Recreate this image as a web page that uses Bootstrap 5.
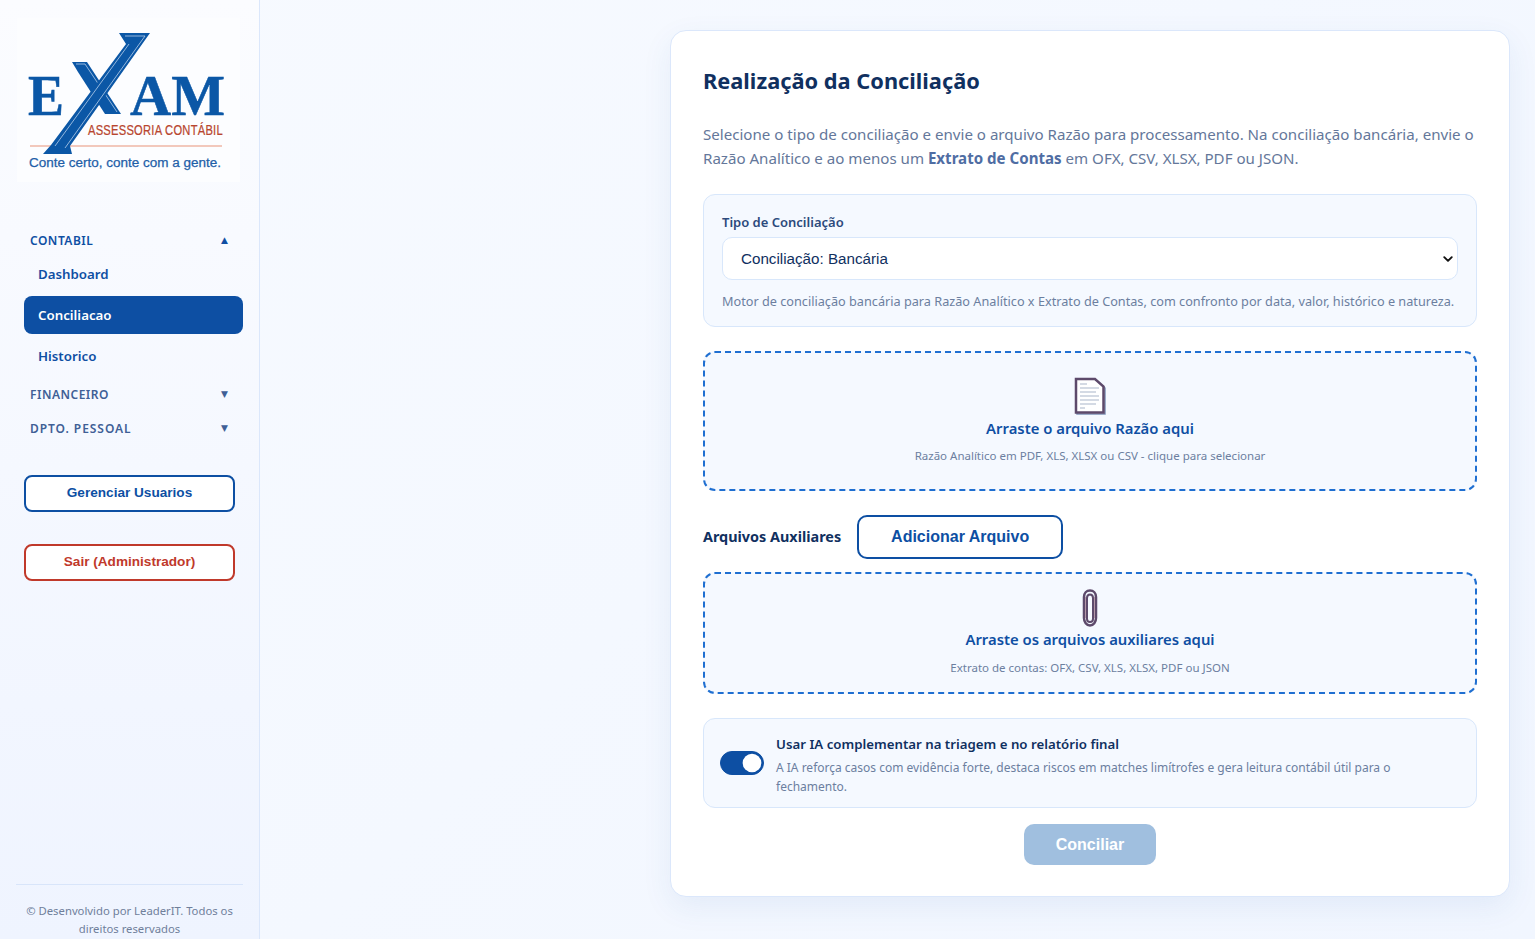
<!DOCTYPE html>
<html lang="pt-BR">
<head>
    <meta charset="UTF-8">
    <title>Conciliacao</title>
    <meta name="viewport" content="width=device-width, initial-scale=1">
    <link href="https://cdn.jsdelivr.net/npm/bootstrap@5.3.2/dist/css/bootstrap.min.css" rel="stylesheet">
    <style>
        body {
            font-family: "Noto Sans", "Liberation Sans", sans-serif;
            background: linear-gradient(135deg, #f7faff, #f1f6ff);
            color: #10305f;
            height: 939px;
            overflow: hidden;
        }
        .sidebar {
            width: 260px;
            height: 939px;
            flex: none;
            background: linear-gradient(180deg, #fbfcff, #eff4ff);
            border-right: 1px solid #dbe7fb;
        }
        .logo-box { height: 218px; padding: 0 17px; }
        .nav-group {
            padding: 0 30px;
            font-size: 12px;
            font-weight: 600;
            letter-spacing: .5px;
            color: #3f5f96;
            height: 34px;
        }
        .nav-group.open { color: #0f4fa3; }
        .nav-group.wide { letter-spacing: .95px; }
        .nav-group span:last-child { font-family: "DejaVu Sans", sans-serif; font-size: 9px; letter-spacing: 0; margin-right: 1px; }
        .nav-item-link {
            display: block;
            margin: 0 16px 0 24px;
            height: 38px;
            line-height: 38px;
            padding-left: 14px;
            border-radius: 8px;
            font-size: 13.3px;
            font-weight: 600;
            color: #0f4fa3;
            text-decoration: none;
        }
        .nav-item-link.first { height: 34px; line-height: 34px; margin-top: -1px; }
        .nav-item-link.active { background: #0d4fa3; color: #fff; margin-top: 5px; }
        .nav-item-link.last { margin-top: 3px; margin-bottom: 3px; }
        .nav-stack { padding-top: 6px; }
        .side-btn {
            font-family: "Liberation Sans", sans-serif;
            font-size: 13.6px;
            font-weight: 700;
            height: 37px;
            width: 211px;
            margin: 29px 0 0 24px;
            padding: 0;
            border-radius: 8px;
            border: 2px solid #0d4fa3;
            background: #fff;
            color: #0d4fa3;
        }
        .side-btn.danger { border-color: #c0392b; color: #c0392b; margin-top: 32px; }
        .side-footer {
            margin: auto 16px 0;
            border-top: 1px solid #d8e5fa;
            padding: 17px 0 1px;
            font-size: 11.3px;
            line-height: 18px;
            color: #6f7f9b;
        }
        .main-card {
            width: 840px;
            height: 867px;
            margin: 30px 25px 0 auto;
            padding: 32px;
            background: #fff;
            border: 1px solid #dbe7fb;
            border-radius: 16px;
            box-shadow: 0 10px 30px rgba(40, 90, 170, .08);
        }
        .main-card h1 { font-size: 21.8px; font-weight: 700; color: #10305f; margin: 3px 0 26px; line-height: 30px; }
        .intro { font-size: 15.1px; line-height: 24px; color: #64779a; margin-bottom: 24px; }
        .intro strong { color: #4f6da3; }
        .panel {
            background: #f5f9ff;
            border: 1px solid #d8e7fb;
            border-radius: 12px;
        }
        .type-panel { height: 133px; padding: 18px 18px 0; }
        .type-panel label { font-size: 13px; font-weight: 600; color: #2c4a7c; line-height: 18px; margin-bottom: 6px; display: block; }
        .type-panel .form-select {
            font-family: "Liberation Sans", sans-serif;
            font-size: 15.2px;
            height: 43px;
            padding-top: 8px;
            padding-left: 18px;
            border-color: #d8e7fb;
            border-radius: 10px;
            color: #10305f;
            background-image: url("data:image/svg+xml,%3csvg xmlns='http://www.w3.org/2000/svg' viewBox='0 0 16 16'%3e%3cpath fill='none' stroke='%23111' stroke-linecap='round' stroke-linejoin='round' stroke-width='3' d='m2 5 6 6 6-6'/%3e%3c/svg%3e");
            background-position: right 4px center;
            background-size: 10px 10px;
        }
        .type-panel small { display: block; margin-top: 12px; font-size: 12.7px; color: #6c7f9f; line-height: 18px; }
        .dropzone {
            background: #f5f9ff;
            border: 2px dashed #1f6fd1;
            border-radius: 12px;
            text-align: center;
        }
        .dropzone svg { display: block; margin: 0 auto 3px; }
        .dropzone h2 { font-size: 14.85px; font-weight: 600; color: #0f4fa3; margin: 0; line-height: 20px; }
        .dropzone p { font-size: 11.5px; color: #6c7f9f; margin: 10px 0 0; line-height: 16px; }
        .zone-main { height: 140px; margin-top: 24px; padding-top: 24px; }
        .zone-aux { height: 122px; padding-top: 15px; }
        .zone-aux svg { margin-bottom: 2px; }
        .zone-aux p { margin-top: 11px; }
        .aux-row { height: 44px; margin: 24px 0 13px; gap: 16px; }
        .aux-row strong { font-size: 14.4px; font-weight: 700; color: #10305f; }
        .add-btn {
            font-family: "Liberation Sans", sans-serif;
            font-size: 16px;
            font-weight: 700;
            width: 206px;
            height: 44px;
            padding: 0;
            border: 2px solid #0d4fa3;
            border-radius: 10px;
            background: #fff;
            color: #0d4fa3;
        }
        .ia-panel { height: 90px; margin-top: 24px; padding: 0 16px; }
        .ia-panel .form-check-input {
            width: 44px;
            height: 24px;
            margin: 0;
            float: none;
            background-color: #0d4fa3;
            border-color: #0d4fa3;
            background-image: url("data:image/svg+xml,%3csvg xmlns='http://www.w3.org/2000/svg' viewBox='-4 -4 8 8'%3e%3ccircle r='3.4' fill='%23fff'/%3e%3c/svg%3e");
        }
        .ia-panel .form-switch { padding: 0; min-height: 0; margin: 0; display: flex; }
        .ia-text { padding-top: 4px; }
        .ia-panel b { display: block; font-size: 13.25px; font-weight: 600; color: #10305f; line-height: 18px; }
        .ia-panel span { display: block; font-size: 12px; line-height: 19px; color: #6c7f9f; margin-top: 5px; }
        .go-btn {
            font-family: "Liberation Sans", sans-serif;
            font-size: 16px;
            font-weight: 700;
            width: 132px;
            height: 41px;
            margin-top: 16px;
            border: 0;
            border-radius: 10px;
            background: #a0bfdf;
            color: #fff;
        }
    </style>
</head>
<body>
<div class="d-flex">
    <aside class="sidebar d-flex flex-column">
        <div class="logo-box">
            <svg width="226" height="218" viewBox="17 0 226 218" role="img" aria-label="Exam">
                <rect x="17" y="18" width="223" height="164" fill="#fcfdff"/>
                <text x="28" y="115" font-family="Liberation Serif" font-weight="700" font-size="57" fill="#0b57a6" stroke="#0b57a6" stroke-width=".5" textLength="36" lengthAdjust="spacingAndGlyphs">E</text>
                <text x="130" y="115" font-family="Liberation Serif" font-weight="700" font-size="57" fill="#0b57a6" stroke="#0b57a6" stroke-width=".5" textLength="95" lengthAdjust="spacingAndGlyphs">AM</text>
                <line x1="30" y1="146" x2="222" y2="146" stroke="#e8937a" stroke-width="1.2"/>
                <path d="M72 62H87L121 114H105L78 72Z" fill="#0b57a6"/>
                <path d="M76 64H85L117 112" fill="none" stroke="#cfe0f3" stroke-width=".7"/>
                <path d="M119 33H150L70 146L72 154H43L51 145L126 44Z" fill="#0b57a6"/>
                <path d="M125 36H145L65 148M129 44L55 146" fill="none" stroke="#cfe0f3" stroke-width=".7"/>
                <text transform="translate(88 135) scale(.72 1)" font-family="Liberation Sans" font-size="15.5" fill="#b8462f" stroke="#b8462f" stroke-width=".25" textLength="187" lengthAdjust="spacing">ASSESSORIA CONTÁBIL</text>
                <text x="29" y="167" font-family="Liberation Sans" font-size="12.5" fill="#1f5fa8" stroke="#1f5fa8" stroke-width=".25" textLength="192" lengthAdjust="spacingAndGlyphs">Conte certo, conte com a gente.</text>
            </svg>
        </div>
        <div class="nav-stack">
            <div class="nav-group open d-flex align-items-center justify-content-between"><span>CONTABIL</span><span>▲</span></div>
            <a class="nav-item-link first" href="#">Dashboard</a>
            <a class="nav-item-link active" href="#">Conciliacao</a>
            <a class="nav-item-link last" href="#">Historico</a>
            <div class="nav-group d-flex align-items-center justify-content-between"><span>FINANCEIRO</span><span>▼</span></div>
            <div class="nav-group wide d-flex align-items-center justify-content-between"><span>DPTO. PESSOAL</span><span>▼</span></div>
        </div>
        <button class="side-btn">Gerenciar Usuarios</button>
        <button class="side-btn danger">Sair (Administrador)</button>
        <div class="side-footer text-center">© Desenvolvido por LeaderIT. Todos os direitos reservados</div>
    </aside>
    <main class="flex-grow-1">
        <div class="main-card">
            <h1>Realização da Conciliação</h1>
            <p class="intro">Selecione o tipo de conciliação e envie o arquivo Razão para processamento. Na conciliação bancária, envie o Razão Analítico e ao menos um <strong>Extrato de Contas</strong> em OFX, CSV, XLSX, PDF ou JSON.</p>
            <div class="panel type-panel">
                <label for="tipo">Tipo de Conciliação</label>
                <select id="tipo" class="form-select"><option>Conciliação: Bancária</option></select>
                <small>Motor de conciliação bancária para Razão Analítico x Extrato de Contas, com confronto por data, valor, histórico e natureza.</small>
            </div>
            <div class="dropzone zone-main">
                <svg width="32" height="38" viewBox="0 0 32 38">
                    <path d="M3 3H22L31 11V37H3Z" fill="none" stroke="#7f94b8" stroke-width="1.500"/>
                    <path d="M2 2H21L29.500 9.500V35.500H2Z" fill="#fff" stroke="#5d4a6b" stroke-width="2.500"/>
                    <path d="M6 7H13M6 11H25M6 15H22M6 19H25M6 23H25M6 27H22M6 31H11" stroke="#a9b5c9" stroke-width="1"/>
                </svg>
                <h2>Arraste o arquivo Razão aqui</h2>
                <p>Razão Analítico em PDF, XLS, XLSX ou CSV - clique para selecionar</p>
            </div>
            <div class="aux-row d-flex align-items-center">
                <strong>Arquivos Auxiliares</strong>
                <button class="add-btn">Adicionar Arquivo</button>
            </div>
            <div class="dropzone zone-aux">
                <svg width="16" height="38" viewBox="0 0 16 38">
                    <path d="M14 12V29C14 33 11.500 36.500 8 36.500S2 33 2 29V8C2 4 4.500 1.500 8 1.500S14 4 14 8V29" fill="none" stroke="#5d4a6b" stroke-width="2.500"/>
                    <path d="M5 30V9C5 7 6 5.500 8 5.500S11 7 11 9V30C11 32 10 33 8 33S5 32 5 30Z" fill="none" stroke="#5d4a6b" stroke-width="2"/>
                    <path d="M3.500 29V8M12.500 29V8" stroke="#b496a8" stroke-width="1"/>
                </svg>
                <h2>Arraste os arquivos auxiliares aqui</h2>
                <p>Extrato de contas: OFX, CSV, XLS, XLSX, PDF ou JSON</p>
            </div>
            <div class="panel ia-panel d-flex align-items-center gap-2">
                <div class="form-check form-switch me-1"><input class="form-check-input" type="checkbox" role="switch" checked></div>
                <div class="ia-text">
                    <b>Usar IA complementar na triagem e no relatório final</b>
                    <span>A IA reforça casos com evidência forte, destaca riscos em matches limítrofes e gera leitura contábil útil para o fechamento.</span>
                </div>
            </div>
            <div class="text-center"><button class="go-btn">Conciliar</button></div>
        </div>
    </main>
</div>
<script src="https://cdn.jsdelivr.net/npm/bootstrap@5.3.2/dist/js/bootstrap.bundle.min.js"></script>
</body>
</html>
